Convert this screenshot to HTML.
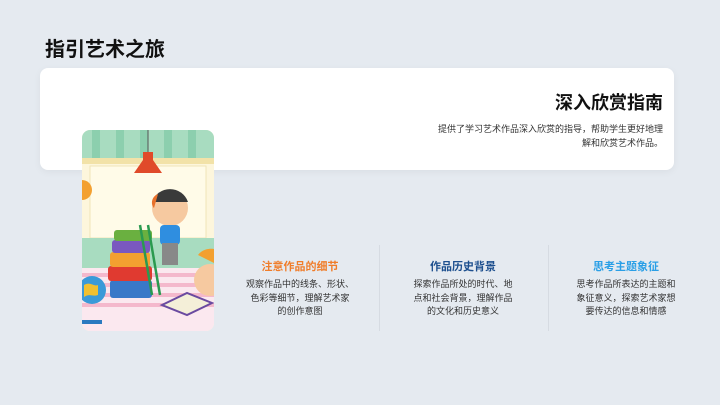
<!DOCTYPE html>
<html><head><meta charset="utf-8"><style>
*{margin:0;padding:0;box-sizing:border-box}
body{width:720px;height:405px;background:#e5eaf0;font-family:"Liberation Sans","Noto Sans CJK SC",sans-serif;position:relative;overflow:hidden}
.h1{position:absolute;left:45px;top:33px;font-size:20px;font-weight:bold;color:#111}
.card{position:absolute;left:40px;top:68px;width:634px;height:102px;background:#fff;border-radius:8px;box-shadow:0 2px 8px rgba(0,0,0,0.05)}
.h2{position:absolute;right:57px;top:89px;font-size:18px;font-weight:bold;color:#111}
.desc{position:absolute;right:57px;top:123px;width:300px;text-align:right;font-size:9px;line-height:13.5px;color:#333;white-space:nowrap}
.img{position:absolute;left:82px;top:130px;width:132px;height:201px;border-radius:8px;overflow:hidden;background:#fdf8e0}
.col{position:absolute;top:258px;width:130px;text-align:center;white-space:nowrap}
.col b{display:block;font-size:11px;margin-bottom:4px}
.col p{font-size:9px;line-height:13.5px;color:#333}
.div{position:absolute;top:245px;width:1px;height:86px;background:#d6dbe2}
</style></head><body>
<div class="h1">指引艺术之旅</div>
<div class="card"></div>
<div class="h2">深入欣赏指南</div>
<div class="desc">提供了学习艺术作品深入欣赏的指导，帮助学生更好地理<br>解和欣赏艺术作品。</div>
<div class="img">
<svg width="132" height="201" viewBox="0 0 132 201">
<rect width="132" height="201" fill="#fdf6dc"/>
<rect width="132" height="28" fill="#a8dcc0"/>
<g fill="#8ccfae"><rect x="10" width="8" height="28"/><rect x="34" width="8" height="28"/><rect x="58" width="8" height="28"/><rect x="82" width="8" height="28"/><rect x="106" width="8" height="28"/></g>
<rect y="28" width="132" height="6" fill="#f2e2a8"/>
<rect x="8" y="36" width="116" height="72" fill="#fffbe8" stroke="#f0e4b8"/>
<rect y="108" width="132" height="30" fill="#a8dcc0"/>
<line x1="66" y1="0" x2="66" y2="22" stroke="#555"/>
<path d="M61 22h10v8l9 13h-28l9-13z" fill="#e04a2a"/>
<rect y="138" width="132" height="63" fill="#fbe8ef"/>
<g stroke="#f4b8cc" stroke-width="4"><line x1="0" y1="145" x2="132" y2="145"/><line x1="0" y1="155" x2="132" y2="155"/><line x1="0" y1="165" x2="132" y2="165"/><line x1="0" y1="175" x2="132" y2="175"/></g>
<rect x="28" y="150" width="42" height="18" rx="3" fill="#3a78c8"/>
<rect x="26" y="136" width="44" height="15" rx="3" fill="#e03a30"/>
<rect x="28" y="122" width="40" height="15" rx="3" fill="#f3a030"/>
<rect x="30" y="110" width="38" height="13" rx="3" fill="#7a58c0"/>
<rect x="32" y="100" width="38" height="11" rx="3" fill="#6ab040"/>
<path d="M58 95l12 70M66 95l12 70" stroke="#2a9a50" stroke-width="2.5"/>
<circle cx="88" cy="78" r="18" fill="#f6c9a0"/>
<path d="M70 72a19 19 0 0 1 36 0z" fill="#3a3a3a"/>
<path d="M72 78c-4 -4 -2 -12 4 -14" fill="#e8702a"/>
<rect x="78" y="95" width="20" height="20" rx="4" fill="#2f8ee0"/>
<rect x="80" y="113" width="16" height="22" fill="#888"/>
<circle cx="128" cy="150" r="16" fill="#f6c9a0"/>
<path d="M116 125c6-8 16-6 16-6v14z" fill="#f3a030"/>
<path d="M80 175l25-12 25 10-25 12z" fill="#f4efd8" stroke="#6a4aa0" stroke-width="2"/>
<circle cx="10" cy="160" r="14" fill="#3a9ad8"/>
<path d="M2 155c6 -4 10 2 14 0v10c-6 2-8-2-14 2z" fill="#f0c030"/>
<rect x="0" y="190" width="20" height="4" fill="#2a7ac0"/>
<circle cx="0" cy="60" r="10" fill="#f3a030"/>
</svg>
</div>
<div class="col" style="left:235px"><b style="color:#f07d2a">注意作品的细节</b><p>观察作品中的线条、形状、<br>色彩等细节，理解艺术家<br>的创作意图</p></div>
<div class="div" style="left:379px"></div>
<div class="col" style="left:398px"><b style="color:#1d4f8e">作品历史背景</b><p>探索作品所处的时代、地<br>点和社会背景，理解作品<br>的文化和历史意义</p></div>
<div class="div" style="left:548px"></div>
<div class="col" style="left:561px"><b style="color:#2a9fe6">思考主题象征</b><p>思考作品所表达的主题和<br>象征意义，探索艺术家想<br>要传达的信息和情感</p></div>
</body></html>
